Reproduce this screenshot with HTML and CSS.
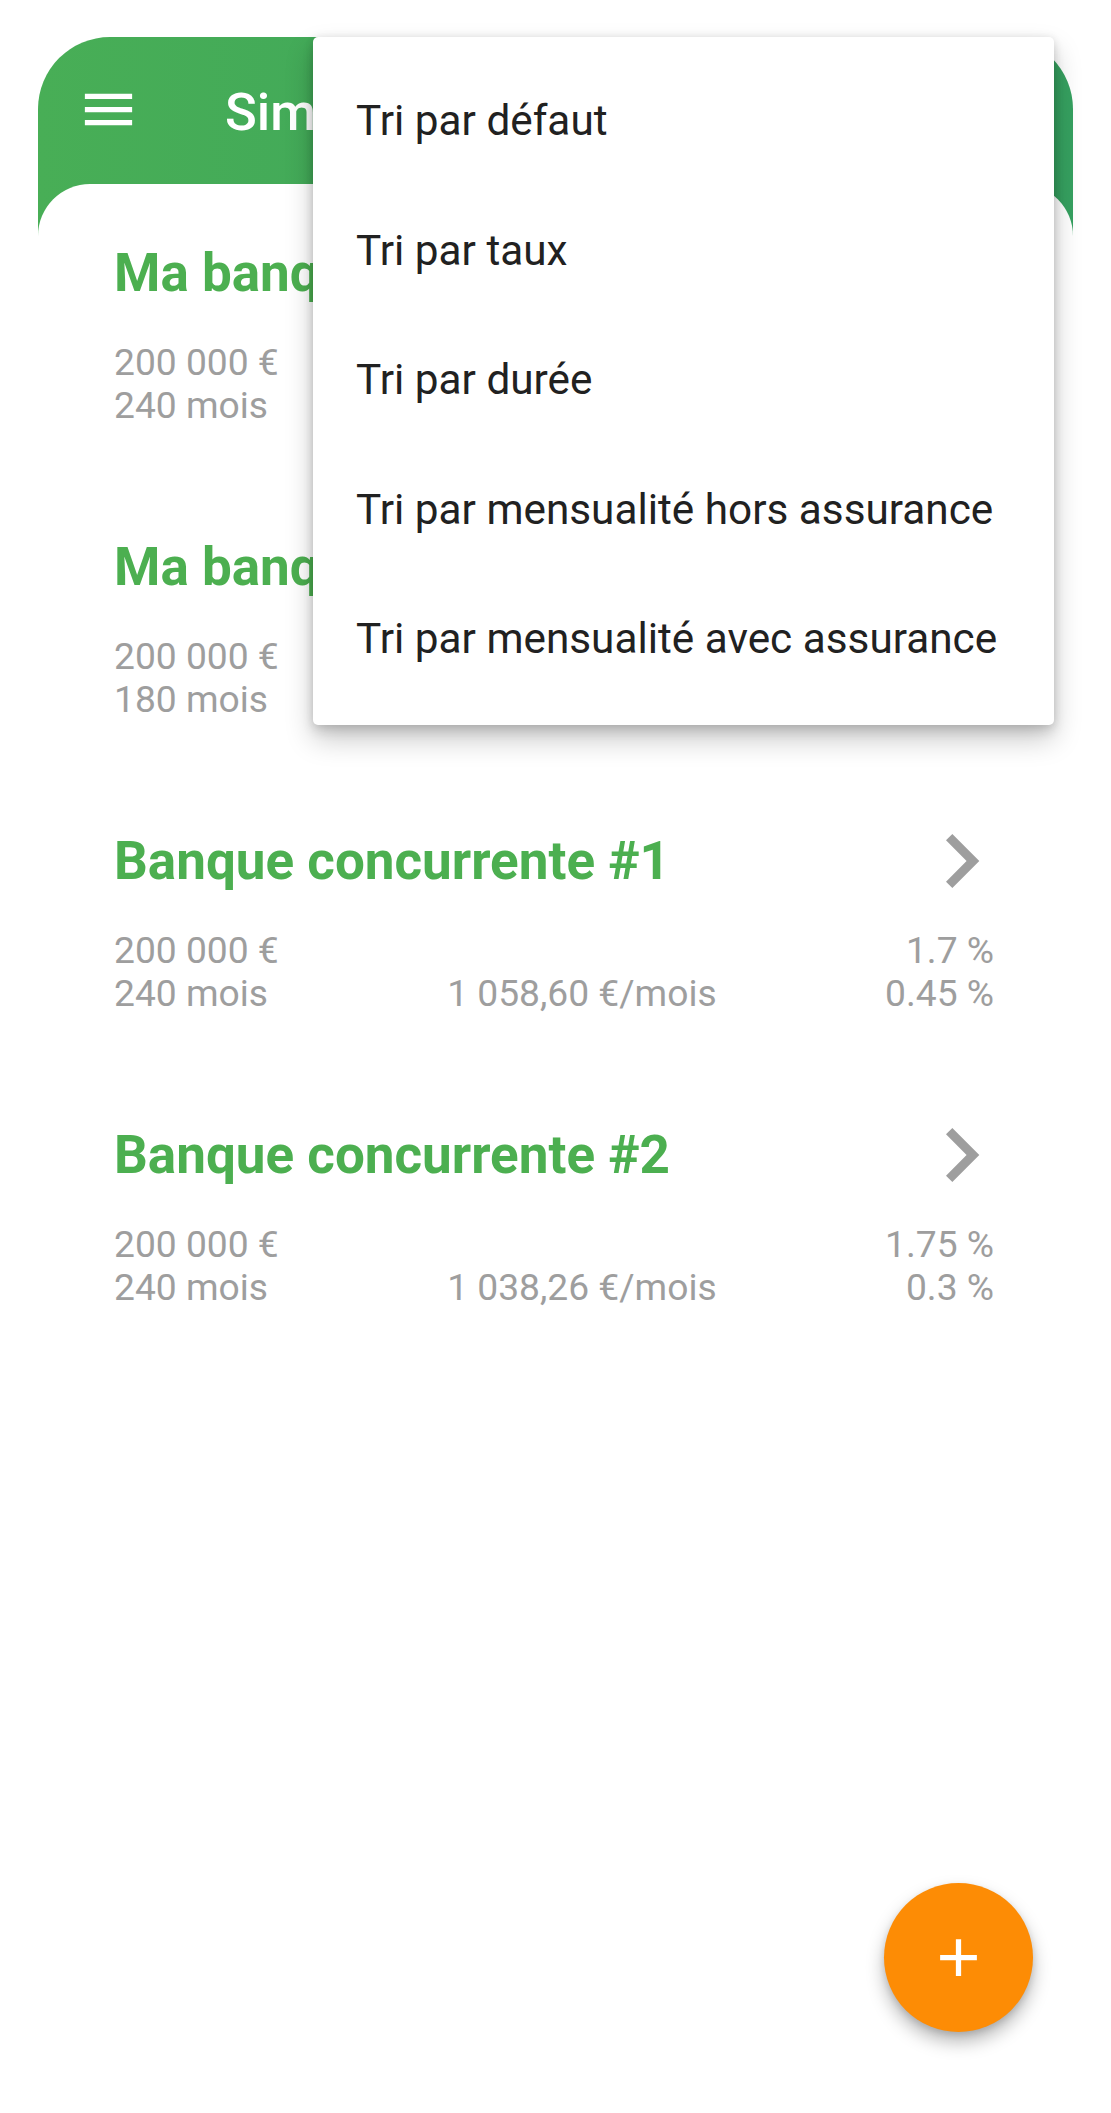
FILE: index.html
```html
<!DOCTYPE html>
<html lang="fr">
<head>
<meta charset="utf-8">
<title>Simulations</title>
<link rel="stylesheet" href="styles.css">
</head>
<body>
<div class="frame">
  <header class="appbar">
    <svg class="menu-icon" viewBox="0 0 24 24"><path d="M3 18h18v-2H3v2zm0-5h18v-2H3v2zm0-7v2h18V6H3z"/></svg>
    <h1 class="title">Simulations</h1>
  </header>
  <main class="sheet">
    <ul class="list">
      <li class="item">
        <div class="item-head">
          <span class="item-title">Ma banque</span>
          <svg class="chevron" viewBox="8.59 6 7.41 12"><path d="M10 6L8.59 7.41 13.17 12l-4.58 4.59L10 18l6-6z"/></svg>
        </div>
        <div class="item-body">
          <div class="col col-left"><span>200 000 €</span><span>240 mois</span></div>
          <div class="col col-mid"><span>&nbsp;</span><span>1 072,90 €/mois</span></div>
          <div class="col col-right"><span>1.8 %</span><span>0.36 %</span></div>
        </div>
      </li>
      <li class="item">
        <div class="item-head">
          <span class="item-title">Ma banque</span>
          <svg class="chevron" viewBox="8.59 6 7.41 12"><path d="M10 6L8.59 7.41 13.17 12l-4.58 4.59L10 18l6-6z"/></svg>
        </div>
        <div class="item-body">
          <div class="col col-left"><span>200 000 €</span><span>180 mois</span></div>
          <div class="col col-mid"><span>&nbsp;</span><span>1 302,44 €/mois</span></div>
          <div class="col col-right"><span>1.5 %</span><span>0.36 %</span></div>
        </div>
      </li>
      <li class="item">
        <div class="item-head">
          <span class="item-title">Banque concurrente #1</span>
          <svg class="chevron" viewBox="8.59 6 7.41 12"><path d="M10 6L8.59 7.41 13.17 12l-4.58 4.59L10 18l6-6z"/></svg>
        </div>
        <div class="item-body">
          <div class="col col-left"><span>200 000 €</span><span>240 mois</span></div>
          <div class="col col-mid"><span>&nbsp;</span><span>1 058,60 €/mois</span></div>
          <div class="col col-right"><span>1.7 %</span><span>0.45 %</span></div>
        </div>
      </li>
      <li class="item">
        <div class="item-head">
          <span class="item-title">Banque concurrente #2</span>
          <svg class="chevron" viewBox="8.59 6 7.41 12"><path d="M10 6L8.59 7.41 13.17 12l-4.58 4.59L10 18l6-6z"/></svg>
        </div>
        <div class="item-body">
          <div class="col col-left"><span>200 000 €</span><span>240 mois</span></div>
          <div class="col col-mid"><span>&nbsp;</span><span>1 038,26 €/mois</span></div>
          <div class="col col-right"><span>1.75 %</span><span>0.3 %</span></div>
        </div>
      </li>
    </ul>
  </main>
</div>

<ul class="popup">
  <li class="popup-item">Tri par défaut</li>
  <li class="popup-item">Tri par taux</li>
  <li class="popup-item">Tri par durée</li>
  <li class="popup-item">Tri par mensualité hors assurance</li>
  <li class="popup-item">Tri par mensualité avec assurance</li>
</ul>

<button class="fab" type="button" aria-label="Ajouter">
  <svg class="fab-icon" viewBox="0 0 24 24"><path d="M19 13h-6v6h-2v-6H5v-2h6V5h2v6h6v2z"/></svg>
</button>
</body>
</html>
```

FILE: styles.css
```css
html, body {
  margin: 0;
  padding: 0;
  background: #ffffff;
  font-family: Roboto, "Noto Sans", "Liberation Sans", sans-serif;
}

.frame {
  margin: 37px 38px 0;
  border-radius: 72px 72px 0 0;
  background: linear-gradient(to right, #48ae56, #36a160) top / 100% 280px no-repeat;
}

.appbar {
  height: 147px;
  box-sizing: border-box;
  display: flex;
  align-items: center;
  padding: 0 0 3px 39px;
  color: #ffffff;
}

.menu-icon {
  width: 63px;
  height: 63px;
  flex: none;
  fill: #ffffff;
}

.title {
  margin: 0 0 0 85px;
  padding-top: 6px;
  font-size: 52.5px;
  font-weight: 500;
  line-height: normal;
  white-space: nowrap;
}

.sheet {
  background: #ffffff;
  border-radius: 52px 52px 0 0;
  min-height: 1700px;
}

.list {
  list-style: none;
  margin: 0;
  padding: 0;
}

.item {
  padding: 58px 79px 51px 76px;
}

.item-head {
  display: flex;
  align-items: center;
  justify-content: space-between;
}

.item-title {
  font-size: 53px;
  font-weight: 700;
  color: #4caf50;
  line-height: normal;
}

.chevron {
  width: 33.3px;
  height: 54px;
  margin-right: 14.5px;
  fill: #9e9e9e;
  flex: none;
}

.item-body {
  display: flex;
  margin-top: 37px;
  font-size: 37.2px;
  line-height: 43px;
  color: #9e9e9e;
}

.col {
  display: flex;
  flex-direction: column;
  white-space: nowrap;
}

.col-mid {
  flex: 1;
  text-align: center;
}

.col-right {
  text-align: right;
}

.popup {
  position: absolute;
  top: 37px;
  left: 313px;
  width: 741px;
  margin: 0;
  padding: 19px 0 21px;
  list-style: none;
  background: #ffffff;
  border-radius: 5px;
  box-shadow: 0 14px 28px rgba(0, 0, 0, 0.22), 0 6px 12px rgba(0, 0, 0, 0.12), 0 0 8px rgba(0, 0, 0, 0.08);
}

.popup-item {
  height: 129.5px;
  display: flex;
  align-items: center;
  padding-left: 43px;
  font-size: 42.3px;
  color: #212121;
  white-space: nowrap;
}

.fab {
  position: absolute;
  right: 78px;
  bottom: 81px;
  width: 149px;
  height: 149px;
  border: none;
  border-radius: 50%;
  padding: 0;
  background: #fd8c05;
  display: flex;
  align-items: center;
  justify-content: center;
  box-shadow: 0 10px 18px rgba(0, 0, 0, 0.28), 0 3px 6px rgba(0, 0, 0, 0.12);
}

.fab-icon {
  width: 63px;
  height: 63px;
  fill: #ffffff;
}
```
